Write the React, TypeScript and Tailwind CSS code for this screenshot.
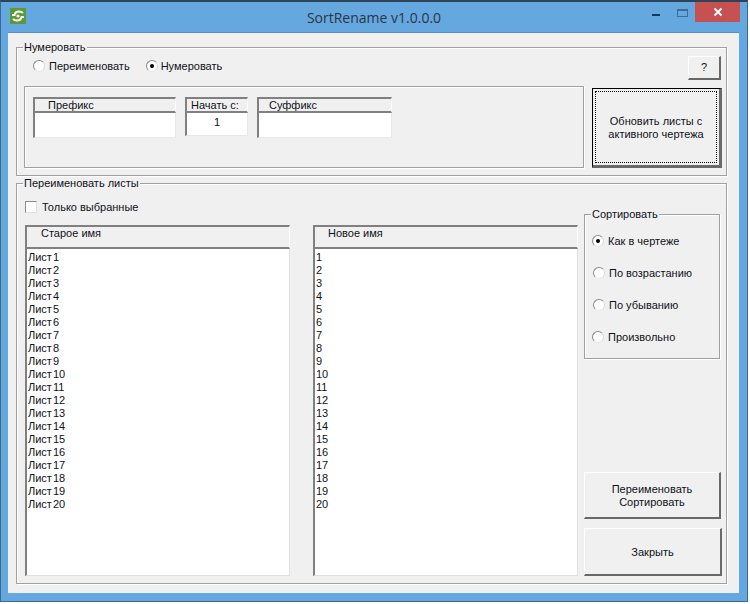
import React from "react";

const F = "font-['Liberation_Sans',sans-serif] text-[11px] leading-[13px] text-[#101020]";

function Radio({ on }: { on?: boolean }) {
  return (
    <span className="relative block w-[12px] h-[12px] rounded-full bg-white border border-[#8a8a8a] border-r-[#dcdcdc] border-b-[#e8e8e8] shrink-0">
      {on && <span className="absolute left-[3px] top-[3px] w-[4px] h-[4px] rounded-full bg-black" />}
    </span>
  );
}

function Group({ label, className, children }: { label: string; className: string; children?: React.ReactNode }) {
  return (
    <div className={`relative border border-[#a0a0a0] shadow-[inset_1px_1px_0_#fff,1px_1px_0_#fff] ${className}`}>
      <span className={`absolute left-[6px] top-[-7px] bg-[#f0f0f0] px-[1px] ${F}`}>{label}</span>
      {children}
    </div>
  );
}

function Field({ title, value, width, indent, h }: { title: string; value?: string; width: string; indent: string; h: string }) {
  return (
    <div className={`flex flex-col ${width}`}>
      <div className={`h-[16px] border-t-2 border-l-2 border-[#808080] border-r border-r-white border-b-2 border-b-[#808080] ${indent} ${F} leading-[12px]`}>{title}</div>
      <div className={`${h} bg-white border-l-2 border-[#808080] border-r border-r-[#e8e8e8] border-b border-b-[#e8e8e8] text-center ${F} leading-[19px]`}>{value}</div>
    </div>
  );
}

function ListCol({ title, items, indent }: { title: string; items: string[]; indent: string }) {
  return (
    <div className="flex flex-col w-[265px] h-[351px]">
      <div className={`h-[24px] bg-[#f0f0f0] border-t-2 border-l-2 border-[#808080] border-r border-r-white border-b-2 border-b-[#808080] ${indent} ${F} leading-[12px]`}>{title}</div>
      <ul className={`flex-1 bg-white border-l-2 border-[#808080] border-r border-r-[#e0e0e0] border-b border-b-[#e0e0e0] pt-[2px] pl-[1px] [word-spacing:-2px] ${F}`}>
        {items.map((t) => (
          <li key={t} className="h-[13px]">{t}</li>
        ))}
      </ul>
    </div>
  );
}

function Btn({ className, children }: { className: string; children: React.ReactNode }) {
  return (
    <button className={`flex items-center justify-center text-center border border-white border-r-2 border-b-2 border-r-[#696969] border-b-[#696969] bg-[#f0f0f0] ${F} ${className}`}>
      {children}
    </button>
  );
}

const nums = Array.from({ length: 20 }, (_, i) => String(i + 1));

export default function App() {
  return (
    <div className="w-[748px] h-[602px] flex flex-col bg-[#65a7df] border-t-2 border-x border-b border-[#3a6a94] border-t-[#2c4358]">
      <div className="h-[30px] relative flex items-start">
        <svg width="16" height="16" viewBox="0 0 16 16" className="ml-[9px] mt-[6px] shrink-0">
          <rect width="16" height="16" fill="#5c9a34" />
          <path d="M2 7 H4.5 C5 4.5 7 3.5 9 3.5 C10.5 3.5 12 4 13 5 M14 9 H11.5 C11 11.5 9 12.5 7 12.5 C5.5 12.5 4 12 3 11" stroke="#fff" strokeWidth="2" fill="none" />
          <circle cx="8" cy="8" r="1.6" fill="#fff" />
        </svg>
        <div className="absolute left-0 right-0 top-[6px] text-center font-['Open_Sans',sans-serif] text-[14px] leading-[19px] text-[#2a3644]">SortRename v1.0.0.0</div>
        <div className="ml-auto flex items-start relative mr-[7px]">
          <span className="block w-[8px] h-[2px] bg-[#22364a] mt-[12px] mr-[17px]" />
          <span className="block w-[11px] h-[8px] border border-t-2 border-[#3f6d96] mt-[7px] mr-[7px]" />
          <span className="flex items-center justify-center w-[45px] h-[20px] bg-[#c75050]">
            <svg width="10" height="10" viewBox="0 0 10 10"><path d="M1.5 1.5 L8.5 8.5 M8.5 1.5 L1.5 8.5" stroke="#fff" strokeWidth="2" /></svg>
          </span>
        </div>
      </div>

      <div className="mx-[7px] w-[731px] h-[561px] bg-[#f0f0f0] pt-[14px] pl-[8px] border-t border-[#5a8fc0]">
        <Group label="Нумеровать" className="w-[711px] h-[129px] pl-[7px]">
          <div className="flex items-center h-[34px] pt-[2px] pr-[5px]">
            <div className={`flex items-center ml-[9px] ${F}`}><Radio /><span className="ml-[4px]">Переименовать</span></div>
            <div className={`flex items-center ml-[16px] ${F}`}><Radio on /><span className="ml-[3px]">Нумеровать</span></div>
            <Btn className="w-[33px] h-[24px] ml-auto mt-[4px]">?</Btn>
          </div>
          <div className="flex mt-[-4px]">
            <div className="relative w-[560px] h-[82px] mt-[8px] border border-[#a0a0a0] shadow-[inset_1px_1px_0_#fff,1px_1px_0_#fff] pt-[10px] pl-[8px] flex items-start">
              <Field title="Префикс" width="w-[143px]" indent="pl-[13px]" h="h-[25px]" />
              <div className="w-[9px]" />
              <Field title="Начать с:" value="1" width="w-[63px]" indent="pl-[4px]" h="h-[23px]" />
              <div className="w-[9px]" />
              <Field title="Суффикс" width="w-[135px]" indent="pl-[10px]" h="h-[25px]" />
            </div>
            <button className={`relative w-[130px] h-[80px] ml-[8px] mt-[10px] pt-[2px] border border-black border-r-[3px] border-b-[3px] border-r-[#696969] border-b-[#696969] bg-[#f0f0f0] ${F}`}>
              <span className="absolute inset-[2px] border border-dotted border-black" />
              Обновить листы с<br />активного чертежа
            </button>
          </div>
        </Group>

        <Group label="Переименовать листы" className="w-[711px] h-[401px] mt-[7px] pl-[8px]">
          <div className={`flex items-center h-[14px] mt-[16px] ${F}`}>
            <span className="block w-[12px] h-[12px] bg-white border border-[#8a8a8a] border-r-[#e0e0e0] border-b-[#e0e0e0] shrink-0" />
            <span className="ml-[5px]">Только выбранные</span>
          </div>
          <div className="flex items-start mt-[11px]">
            <ListCol title="Старое имя" items={nums.map((n) => `Лист ${n}`)} indent="pl-[14px]" />
            <div className="w-[23px]" />
            <ListCol title="Новое имя" items={nums} indent="pl-[13px]" />
            <div className="ml-[6px] flex flex-col">
              <Group label="Сортировать" className="w-[136px] h-[145px] mt-[-11px]">
                <div className={`flex flex-col pt-[18px] pl-[7px] gap-[17px] ${F}`}>
                  <div className="flex items-center"><Radio on /><span className="ml-[4px] pt-[2px]">Как в чертеже</span></div>
                  <div className="flex items-center ml-[1px]"><Radio /><span className="ml-[4px] pt-[2px]">По возрастанию</span></div>
                  <div className="flex items-center ml-[1px]"><Radio /><span className="ml-[4px] pt-[2px]">По убыванию</span></div>
                  <div className="flex items-center"><Radio /><span className="ml-[4px] pt-[2px]">Произвольно</span></div>
                </div>
              </Group>
              <Btn className="w-[137px] h-[47px] mt-[113px] pt-[2px]">Переименовать<br />Сортировать</Btn>
              <Btn className="w-[138px] h-[48px] mt-[9px] pt-[2px]">Закрыть</Btn>
            </div>
          </div>
        </Group>
      </div>
    </div>
  );
}
